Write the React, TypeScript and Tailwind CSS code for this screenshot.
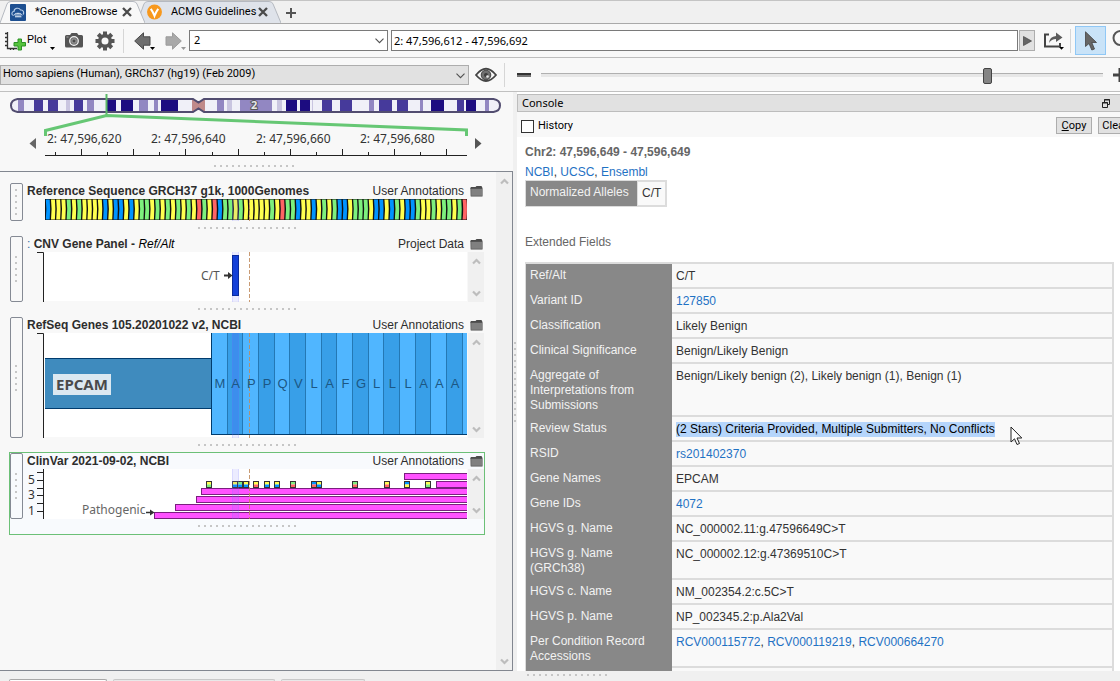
import React from "react";

const BASES =
  "BYYYGYGYYYYBYBBYBYGGYGYGYGYGYRGYRBGGYGYYYYYGYRGGBYYBYGYGBBYGGGYBBYBGYBBGYYGYGGYGR";

const BASE_COLORS: Record<string, string> = {
  B: "#0094ff",
  Y: "#ffff4f",
  G: "#7df07d",
  R: "#ff6464",
};

const PEPTIDE = "MAPPQVLAFGLLLAAA";

const BANDS: [number, number, string][] = [
  [18, 24, "#9287c2"],
  [34, 43, "#463a9b"],
  [48, 58, "#463a9b"],
  [66, 70, "#c9c5e0"],
  [74, 83, "#463a9b"],
  [87, 94, "#9287c2"],
  [107, 116, "#1c0c80"],
  [121, 133, "#1c0c80"],
  [139, 148, "#9287c2"],
  [154, 158, "#9287c2"],
  [161, 178, "#1c0c80"],
  [192, 205, "#c08a8a"],
  [217, 224, "#9287c2"],
  [227, 232, "#c9c5e0"],
  [240, 272, "#9287c2"],
  [277, 282, "#c9c5e0"],
  [286, 297, "#1c0c80"],
  [300, 310, "#1c0c80"],
  [312, 313, "#c9c5e0"],
  [322, 332, "#463a9b"],
  [340, 352, "#463a9b"],
  [369, 374, "#9287c2"],
  [379, 392, "#463a9b"],
  [397, 408, "#463a9b"],
  [420, 423, "#9287c2"],
  [431, 444, "#1c0c80"],
  [457, 464, "#463a9b"],
  [466, 476, "#1c0c80"],
  [485, 489, "#9287c2"],
];

const VARIANTS: [number, string, string][] = [
  [206, "Y", "G"],
  [232, "Y", "B"],
  [237, "G", "B"],
  [243, "Y", "B"],
  [253, "Y", "R"],
  [264, "Y", "B"],
  [274, "Y", "B"],
  [290, "G", "R"],
  [311, "B", "R"],
  [316, "Y", "B"],
  [352, "G", "R"],
  [384, "Y", "R"],
  [404, "B", "Y"],
  [425, "Y", "G"],
];

const CNV_BARS: [number, number][] = [
  [404, 4],
  [436, 12],
  [201, 19],
  [196, 27],
  [175, 35],
  [154, 43],
];

const FIELDS: { label: string; value: string[]; kind?: "link" | "selected" }[] = [
  { label: "Ref/Alt", value: ["C/T"] },
  { label: "Variant ID", value: ["127850"], kind: "link" },
  { label: "Classification", value: ["Likely Benign"] },
  { label: "Clinical Significance", value: ["Benign/Likely Benign"] },
  {
    label: "Aggregate of Interpretations from Submissions",
    value: ["Benign/Likely benign (2), Likely benign (1), Benign (1)"],
  },
  {
    label: "Review Status",
    value: ["(2 Stars) Criteria Provided, Multiple Submitters, No Conflicts"],
    kind: "selected",
  },
  { label: "RSID", value: ["rs201402370"], kind: "link" },
  { label: "Gene Names", value: ["EPCAM"] },
  { label: "Gene IDs", value: ["4072"], kind: "link" },
  { label: "HGVS g. Name", value: ["NC_000002.11:g.47596649C>T"] },
  { label: "HGVS g. Name (GRCh38)", value: ["NC_000002.12:g.47369510C>T"] },
  { label: "HGVS c. Name", value: ["NM_002354.2:c.5C>T"] },
  { label: "HGVS p. Name", value: ["NP_002345.2:p.Ala2Val"] },
  {
    label: "Per Condition Record Accessions",
    value: ["RCV000115772", "RCV000119219", "RCV000664270"],
    kind: "link",
  },
];

function Links({ items }: { items: string[] }) {
  return (
    <>
      {items.map((item, i) => (
        <React.Fragment key={item}>
          {i > 0 && ", "}
          <a href="#" className="text-[#1f72c4]">
            {item}
          </a>
        </React.Fragment>
      ))}
    </>
  );
}

function Grip({ vertical = false, count = 14, className = "" }: { vertical?: boolean; count?: number; className?: string }) {
  const dots = Array.from({ length: count }, (_, i) => i * 6);
  const len = count * 6 - 4;
  return (
    <svg width={vertical ? 3 : len} height={vertical ? len : 3} className={"shrink-0 " + className} aria-hidden="true">
      {dots.map((d) => (
        <rect key={d} x={vertical ? 0 : d} y={vertical ? d : 0} width="2" height="2" fill="#c6c6c6" />
      ))}
    </svg>
  );
}

function Chevron({ up = false }: { up?: boolean }) {
  return (
    <svg width="9" height="7" viewBox="0 0 9 7" fill="none" stroke="#bdbdbd" strokeWidth="2.2" aria-hidden="true">
      <path d={up ? "M1 5.5 4.5 2 8 5.5" : "M1 1.5 4.5 5 8 1.5"} />
    </svg>
  );
}

function ThinChevron() {
  return (
    <svg width="9" height="6" viewBox="0 0 9 6" fill="none" stroke="#505050" strokeWidth="1.1" className="pointer-events-none absolute right-1 top-2" aria-hidden="true">
      <path d="M.5 .7 4.5 4.7 8.5 .7" />
    </svg>
  );
}

function ScrollStrip() {
  return (
    <div className="flex w-4 shrink-0 flex-col items-center justify-between bg-[#f0f0f0] pb-1 pt-[6px]">
      <button type="button" aria-label="Scroll up" className="flex h-2">
        <Chevron up />
      </button>
      <button type="button" aria-label="Scroll down" className="flex h-2">
        <Chevron />
      </button>
    </div>
  );
}

function Folder() {
  return (
    <svg width="13" height="11" viewBox="0 0 13 11" aria-hidden="true">
      <path d="M0 2.5 1 1 5.500 1 6.500 0 11.500 0 12.500 2V10.500H.8Z" fill="#4b4b4b" />
      <path d="M1.200 2.800H12.200V9.800H1.200Z" fill="#808080" />
      <path d="M0 2.500H.8V10.500L0 9Z" fill="#b0b0b0" />
    </svg>
  );
}

function CloseIcon() {
  return (
    <svg width="10" height="10" viewBox="0 0 10 10" stroke="#4a4a4a" strokeWidth="2.3" aria-hidden="true">
      <path d="M1 1 9 9M9 1 1 9" />
    </svg>
  );
}

function Tab({ title, icon, active = false, width }: { title: string; icon: React.ReactNode; active?: boolean; width: string }) {
  return (
    <div className={"relative flex h-[22px] items-center pl-[10px] " + width + (active ? " z-10" : " -ml-2")}>
      <svg viewBox="0 0 145 22" preserveAspectRatio="none" className="absolute inset-0 h-full w-full" aria-hidden="true">
        <path
          d="M0 22 7 3Q8 .5 11 .5H133Q136 .5 137 3L145 22"
          fill={active ? "#f8f8f8" : "#dfe3ea"}
          stroke="#b5b9c0"
        />
      </svg>
      <button type="button" className="relative flex flex-1 items-center whitespace-nowrap font-['Roboto',sans-serif]">
        {icon}
        <span className="pl-[9px]">{title}</span>
      </button>
      <button type="button" aria-label={"Close " + title} className="relative mr-[13px] shrink-0">
        <CloseIcon />
      </button>
    </div>
  );
}

function TabBar() {
  return (
    <div className="flex h-6 shrink-0 items-end border-b border-[#a9a9a9] bg-[#f0f0f0]">
      <div className="flex h-[23px] flex-1 items-end border-t border-[#c4c4c4]">
        <Tab
          active
          width="w-[145px]"
          title="*GenomeBrowse"
          icon={
            <svg width="16" height="17" viewBox="0 0 16 17" className="shrink-0" aria-hidden="true">
              <rect width="16" height="17" rx="1" fill="#1d4f91" />
              <path d="M3.500 11.500C1 11 1.500 7.500 4 7.500 4 4 9 3 10.500 6 13.500 5.500 14.500 9 13 10.500" fill="none" stroke="#b7cde8" strokeWidth="1.100" />
              <path d="M4 11.500C4 8.500 12 8.500 12 11.500M5 12.800H11.500M6 9.600V12.800M8 9V13M10 9.500V12.800" fill="none" stroke="#e8f0fa" strokeWidth=".9" />
            </svg>
          }
        />
        <Tab
          width="w-[144px]"
          title="ACMG Guidelines"
          icon={
            <svg width="15" height="16" viewBox="0 0 14 15" className="shrink-0" aria-hidden="true">
              <circle cx="7" cy="7.500" r="7" fill="#f7981d" />
              <path d="M3.500 4.500Q5.500 7 7 11 8.500 7 10.500 4.500" fill="none" stroke="#fff" strokeWidth="2" />
            </svg>
          }
        />
        <button type="button" aria-label="New tab" className="mb-1 ml-1 p-px">
          <svg width="10" height="10" viewBox="0 0 10 10" stroke="#555" strokeWidth="2" aria-hidden="true">
            <path d="M5 0V10M0 5H10" />
          </svg>
        </button>
      </div>
    </div>
  );
}

function MenuMark({ className = "" }: { className?: string }) {
  return (
    <svg width="5" height="3" viewBox="0 0 5 3" className={className} aria-hidden="true">
      <path d="M0 0H5L2.500 3Z" fill="currentColor" />
    </svg>
  );
}

function Arrow({ light = false, flip = false }: { light?: boolean; flip?: boolean }) {
  return (
    <svg width="17" height="18" viewBox="0 0 17 18" className={"shrink-0" + (flip ? " -scale-x-100" : "")} aria-hidden="true">
      <path
        d="M.7 9 9.500 .8V4.800H16V13.200H9.500V17.200Z"
        fill={light ? "#a9a9a9" : "#6e6e6e"}
        stroke={light ? "#9c9c9c" : "#4a4a4a"}
      />
    </svg>
  );
}

function Toolbar() {
  return (
    <div className="flex h-[34px] shrink-0 items-center overflow-hidden border-b border-[#bdbdbd] bg-[#f8f8f8]">
      <button type="button" className="ml-1 flex w-[51px] shrink-0 items-center font-['Roboto',sans-serif]">
        <svg width="22" height="20" viewBox="0 0 22 20" className="shrink-0" aria-hidden="true">
          <path d="M3.500 1V17.500H13M1 2.500H3.500M1 6.500H3.500M1 10.500H3.500M1 14.500H3.500M6.500 17V19M9.500 17V19" fill="none" stroke="#333" strokeWidth="1.300" />
          <path d="M14 8H17.500V11.500H21.500V15H17.500V19H14V15H10V11.500H14Z" fill="#55c23d" stroke="#2c9226" />
        </svg>
        <span className="flex-1 pl-px text-left">Plot</span>
        <MenuMark className="mt-4 shrink-0" />
      </button>
      <button type="button" aria-label="Take snapshot" className="ml-[10px] shrink-0">
        <svg width="18" height="15" viewBox="0 0 18 15" aria-hidden="true">
          <path d="M0 3.500Q0 2 1.500 2H5L6.500 0H12L13.500 2H16.500Q18 2 18 3.500V13Q18 14.500 16.500 14.500H1.500Q0 14.500 0 13Z" fill="#555" />
          <circle cx="9" cy="8" r="4.300" fill="#777" stroke="#f4f4f4" strokeWidth="1.200" />
          <circle cx="9" cy="8" r="2" fill="#4c4c4c" stroke="#bbb" strokeWidth=".6" />
          <rect x="1.500" y="3.500" width="2" height="1" fill="#aaa" />
        </svg>
      </button>
      <button type="button" aria-label="Settings" className="ml-3 shrink-0">
        <svg width="20" height="20" viewBox="-10 -10 20 20" aria-hidden="true">
          {[0, 45, 90, 135].map((a) => (
            <rect key={a} x="-2" y="-9.500" width="4" height="19" fill="#555" transform={`rotate(${a})`} />
          ))}
          <circle r="5.300" fill="none" stroke="#555" strokeWidth="3.600" />
          <circle r="3.500" fill="#f8f8f8" />
        </svg>
      </button>
      <div className="mx-2 h-6 w-px shrink-0 bg-[#d6d6d6]" />
      <button type="button" aria-label="Back" className="ml-[2px] flex w-[21px] shrink-0 items-center">
        <Arrow />
        <MenuMark className="-ml-px mt-4 shrink-0" />
      </button>
      <button type="button" aria-label="Forward" className="ml-[10px] flex w-[21px] shrink-0 items-center text-[#999]">
        <Arrow light flip />
        <MenuMark className="-ml-px mt-4 shrink-0" />
      </button>
      <label className="relative ml-[3px] w-[199px] shrink-0">
        <select aria-label="Chromosome" className="block h-[21px] w-full appearance-none border border-[#7a7a7a] bg-white pl-1">
          <option>2</option>
        </select>
        <ThinChevron />
      </label>
      <input
        type="text"
        aria-label="Location"
        defaultValue="2: 47,596,612 - 47,596,692"
        className="ml-[3px] block h-[21px] min-w-0 flex-1 border border-[#7a7a7a] bg-white px-[2px]"
      />
      <button type="button" aria-label="Go" className="ml-px flex h-[21px] w-4 shrink-0 items-center justify-center border border-[#adadad] bg-[#e1e1e1]">
        <svg width="9" height="10" viewBox="0 0 9 10" aria-hidden="true">
          <path d="M.5 .5 8.500 5 .5 9.500Z" fill="#666" stroke="#444" strokeWidth=".7" />
        </svg>
      </button>
      <button type="button" aria-label="Export" className="ml-2 shrink-0">
        <svg width="22" height="19" viewBox="0 0 22 19" aria-hidden="true">
          <path d="M6 3.500H2V15.500H17V12" fill="none" stroke="#444" strokeWidth="2" />
          <path d="M6 12Q6.500 5.500 13 5V1.500L19.500 6.500 13 11V8Q8.500 8 6 12Z" fill="#5c5c5c" />
          <path d="M16 16H21L18.500 18.800Z" fill="#000" />
        </svg>
      </button>
      <div className="ml-[5px] mr-1 h-6 w-px shrink-0 bg-[#d6d6d6]" />
      <button type="button" aria-label="Select" className="flex h-[29px] w-[31px] shrink-0 items-center justify-center border border-[#90c8f6] bg-[#c9e3f8]">
        <svg width="12" height="20" viewBox="0 0 12 20" aria-hidden="true">
          <path d="M.5 .8V15.500L4 12.500 6.800 19 9.500 18 6.800 11.500H11.500Z" fill="#666" stroke="#444" strokeWidth=".8" />
        </svg>
      </button>
      <button type="button" aria-label="Zoom" className="-mr-[14px] ml-[6px] mb-1 w-[22px] shrink-0">
        <svg width="22" height="22" viewBox="0 0 22 22" fill="none" stroke="#555" aria-hidden="true">
          <circle cx="8.500" cy="10" r="7" strokeWidth="2" />
          <path d="M14 15 20 21" strokeWidth="3" />
        </svg>
      </button>
    </div>
  );
}

function GenomeBar() {
  return (
    <div className="flex h-[34px] shrink-0 items-center overflow-hidden border-b border-[#c0c0c0] bg-[#f8f8f8]">
      <label className="relative w-[469px] shrink-0">
        <select
          aria-label="Genome assembly"
          className="block h-5 w-full appearance-none border border-[#adadad] bg-[#e1e1e1] pl-[2px] font-['Roboto',sans-serif]"
        >
          <option>Homo sapiens (Human), GRCh37 (hg19) (Feb 2009)</option>
        </select>
        <ThinChevron />
      </label>
      <button type="button" aria-label="Toggle visibility" className="ml-[6px] shrink-0">
        <svg width="22" height="16" viewBox="0 0 22 16" aria-hidden="true">
          <path d="M1 8Q11-4.500 21 8 11 20 1 8Z" fill="#f8f8f8" stroke="#444" strokeWidth="1.800" />
          <circle cx="11" cy="8" r="4.800" fill="#707070" stroke="#444" />
          <circle cx="11" cy="8" r="2" fill="#3c3c3c" />
          <circle cx="12.500" cy="9.500" r="1.300" fill="#e8e8e8" />
        </svg>
      </button>
      <div className="ml-[7px] mr-3 h-6 w-px shrink-0 bg-[#d6d6d6]" />
      <button type="button" aria-label="Zoom out" className="shrink-0">
        <svg width="14" height="4" aria-hidden="true">
          <rect width="14" height="4" fill="#777" />
          <rect width="14" height="2" fill="#333" />
        </svg>
      </button>
      <input
        type="range"
        aria-label="Zoom level"
        defaultValue={80}
        className="ml-[10px] mr-[10px] h-4 min-w-0 flex-1 appearance-none bg-transparent [&::-webkit-slider-runnable-track]:h-1 [&::-webkit-slider-runnable-track]:border-t [&::-webkit-slider-runnable-track]:border-[#b0b0b0] [&::-webkit-slider-runnable-track]:bg-[#e7e7e7] [&::-webkit-slider-thumb]:-mt-[6px] [&::-webkit-slider-thumb]:h-4 [&::-webkit-slider-thumb]:w-[9px] [&::-webkit-slider-thumb]:appearance-none [&::-webkit-slider-thumb]:rounded-xs [&::-webkit-slider-thumb]:border [&::-webkit-slider-thumb]:border-[#444] [&::-webkit-slider-thumb]:bg-[#858585]"
      />
      <button type="button" aria-label="Zoom in" className="-mr-[7px] shrink-0">
        <svg width="14" height="14" stroke="#444" strokeWidth="3" aria-hidden="true">
          <path d="M7 0V14M0 7H14" />
        </svg>
      </button>
    </div>
  );
}

function Ideogram() {
  const outline =
    "M17.500 99H193L198.500 102.500 204 99H493.500Q500 100 500 105.500 500 111 493.500 112H204L198.500 108.500 193 112H17.500Q11 111 11 105.500 11 100 17.500 99Z";
  return (
    <svg width="512" height="46" viewBox="0 92 512 46" className="shrink-0" role="img" aria-label="Chromosome 2 ideogram">
      <clipPath id="chromosome">
        <path d={outline} />
      </clipPath>
      <g clipPath="url(#chromosome)">
        <rect x="8" y="97" width="496" height="18" fill="#f0f0f8" />
        {BANDS.map(([a, b, color]) => (
          <rect key={a} x={a} y="97" width={b - a} height="18" fill={color} />
        ))}
      </g>
      <path d={outline} fill="none" stroke="#524d70" strokeWidth="2" />
      <text
        x="251"
        y="109"
        className="font-['Noto_Sans'] text-[11px] font-bold"
        fill="#e6e6e6"
        stroke="#555"
        strokeWidth="2"
        paintOrder="stroke"
      >
        2
      </text>
      <path d="M106.500 94V115.500" fill="none" stroke="#5cb868" strokeWidth="2" />
      <path d="M45.500 136V130.500L106.500 115.500 466.500 130V136" fill="none" stroke="#66c774" strokeWidth="3" />
    </svg>
  );
}

function Ruler() {
  return (
    <div className="-mt-[10px] flex h-[37px] shrink-0 items-start pl-[29px]">
      <button type="button" aria-label="Pan left" className="pt-[10px]">
        <svg width="7" height="11" aria-hidden="true">
          <path d="M7 0V11L.5 5.500Z" fill="#666" />
        </svg>
      </button>
      <svg width="422" height="32" viewBox="45 128 422 32" className="ml-[9px]" aria-hidden="true">
        {[
          [47, "2: 47,596,620"],
          [151, "2: 47,596,640"],
          [256, "2: 47,596,660"],
          [360, "2: 47,596,680"],
        ].map(([x, t]) => (
          <text key={t} x={x} y="143" className="font-['Noto_Sans'] text-[12px]" fill="#333">
            {t}
          </text>
        ))}
        <path d="M45 155.500H467" stroke="#222" />
        {[81, 133, 185, 238, 290, 342, 394, 446].map((x) => (
          <path key={x} d={`M${x + 0.5} 149V155M${x - 25.5} 152V155`} stroke="#222" />
        ))}
      </svg>
      <button type="button" aria-label="Pan right" className="ml-2 pt-[10px]">
        <svg width="7" height="11" aria-hidden="true">
          <path d="M0 0V11L6.500 5.500Z" fill="#555" />
        </svg>
      </button>
    </div>
  );
}

function Locus({ height }: { height: number }) {
  return (
    <>
      <rect x="232" y="0" width="7" height={height} fill="#7878ff" fillOpacity=".14" />
      <path d={`M232.500 0V${height}M238.500 0V${height}`} stroke="#7878ff" strokeOpacity=".15" />
      <path d={`M249.500 0V${height}`} stroke="#c08a5c" strokeOpacity=".85" strokeDasharray="4 2" />
    </>
  );
}

function Track({
  title,
  source,
  height,
  scroll = true,
  selected = false,
  children,
}: {
  title: React.ReactNode;
  source: string;
  height: number;
  scroll?: boolean;
  selected?: boolean;
  children: React.ReactNode;
}) {
  return (
    <section className={"mx-[10px] w-[474px]" + (selected ? " bg-[#f8fafd] ring-1 ring-[#6cc077]" : "")}>
      <div className="flex">
        <div className="mr-px flex w-[13px] shrink-0 items-center justify-center rounded-xs border border-[#858a94]">
          <Grip vertical count={5} />
        </div>
        <div className="min-w-0 flex-1">
          <header className="flex h-4 items-center pl-[3px] pr-px font-['Liberation_Sans'] text-[12px] text-[#2d2d2d]">
            <h2 className="flex-1 font-bold">{title}</h2>
            <span className="pr-[6px]">{source}</span>
            <Folder />
          </header>
          <div className="flex">
            <svg width="443" height={height} viewBox={`24 0 443 ${height}`} className="mr-px shrink-0">
              {children}
            </svg>
            {scroll && <ScrollStrip />}
          </div>
        </div>
      </div>
      <div className="flex h-[15px] items-center justify-center">
        <Grip count={17} />
      </div>
    </section>
  );
}

function ReferenceTrack() {
  const step = 422 / 81;
  return (
    <Track title="Reference Sequence GRCH37 g1k, 1000Genomes" source="User Annotations" height={22} scroll={false}>
      <rect x="45" y="0" width="422" height="21" fill="#111" />
      {BASES.split("").map((b, i) => {
        const x = 45 + i * step;
        return (
          <path
            key={i}
            d={`M${x + 0.8} .5Q${x + 2} 10 ${x + 0.8} 20.500H${x + step - 0.5}Q${x + step + 0.4} 10 ${x + step - 0.5} .5Z`}
            fill={BASE_COLORS[b]}
          />
        );
      })}
      <Locus height={22} />
    </Track>
  );
}

function VariantTrack() {
  return (
    <Track
      title={
        <>
          <span className="font-normal text-[#3b6ea5]">: </span>CNV Gene Panel -{" "}
          <em className="font-normal text-black">Ref/Alt</em>
        </>
      }
      source="Project Data"
      height={50}
    >
      <rect x="44" y="0" width="423" height="49" fill="#fff" />
      <path d="M37 .5H43.500V50" fill="none" stroke="#222" />
      <Locus height={50} />
      <rect x="232.500" y="3.500" width="6" height="40" fill="#1440d8" stroke="#0a2a9c" />
      <text x="201" y="28" className="font-['Noto_Sans'] text-[12px]" fill="#555">
        C/T
      </text>
      <path d="M224 23.500H229" stroke="#333" strokeWidth="2" />
      <path d="M228 20V27L232.500 23.500Z" fill="#333" />
    </Track>
  );
}

function GeneTrack() {
  const step = 15.67;
  return (
    <Track title="RefSeq Genes 105.20201022 v2, NCBI" source="User Annotations" height={105}>
      <rect x="44" y="0" width="423" height="104" fill="#fff" />
      <path d="M37 .5H43.500V105" fill="none" stroke="#222" />
      <rect x="45" y="25" width="166" height="51" fill="#3f8bbe" />
      <path d="M45 25.500H211M45 75.500H211" stroke="#003c6e" />
      <rect x="53" y="41" width="58" height="21" fill="#dbe8f1" />
      <text x="56" y="57" className="font-['Noto_Sans'] text-[15px] font-bold" fill="#4a4a4a">
        EPCAM
      </text>
      {Array.from({ length: 17 }, (_, i) => {
        const x = 211.5 + i * step;
        return (
          <g key={i}>
            <rect x={x} y="0" width={Math.min(step, 467 - x)} height="101" fill={i % 2 ? "#389fe8" : "#50b6ff"} />
            <path d={`M${Math.floor(x) + 0.5} 0V101`} stroke={i ? "#2478b4" : "#003c6e"} />
          </g>
        );
      })}
      <path d="M211 101.500H467" stroke="#003c6e" />
      <rect x="232" y="0" width="7" height="101" fill="#2c80f0" fillOpacity=".4" />
      <Locus height={105} />
      {PEPTIDE.split("").map((p, i) => (
        <text
          key={i}
          x={220 + i * step}
          y="55"
          textAnchor="middle"
          className="font-['Liberation_Sans'] text-[13px]"
          fill="#1c5784"
        >
          {p}
        </text>
      ))}
    </Track>
  );
}

function ClinVarTrack() {
  return (
    <Track title="ClinVar 2021-09-02, NCBI" source="User Annotations" height={50} selected>
      <rect x="44" y="0" width="423" height="50" fill="#fff" />
      <path d="M43.500 0V50M37 3.500H43M37 11.500H43M37 19.500H43M37 26.500H43M37 34.500H43M37 42.500H43" stroke="#222" />
      {[
        ["5", 15],
        ["3", 30],
        ["1", 46],
      ].map(([t, y]) => (
        <text key={t} x="28" y={y} className="font-['Noto_Sans'] text-[12px]" fill="#333">
          {t}
        </text>
      ))}
      <text x="82" y="45" className="font-['Noto_Sans'] text-[12px]" fill="#666">
        Pathogenic
      </text>
      {CNV_BARS.map(([x, y]) => (
        <rect key={y} x={x + 0.5} y={y + 0.5} width={470 - x} height="6" fill="#ff52ff" stroke="#7a1f7f" />
      ))}
      <path d="M146 43.500H151" stroke="#333" strokeWidth="1.500" />
      <path d="M150 40.500 154.500 43.500 150 46.500Z" fill="#333" />
      {VARIANTS.map(([x, top, bottom]) => (
        <g key={x}>
          <rect x={x + 0.5} y="12.500" width="5" height="3" fill={BASE_COLORS[top]} />
          <rect x={x + 0.5} y="15.500" width="5" height="3" fill={BASE_COLORS[bottom]} />
          <rect x={x + 0.5} y="12.500" width="5" height="6" fill="none" stroke="#333" />
        </g>
      ))}
      <Locus height={50} />
    </Track>
  );
}

function BrowserPane() {
  return (
    <div className="flex w-[513px] shrink-0 flex-col bg-[#f8f8f8]">
      <Ideogram />
      <Ruler />
      <Grip className="ml-[214px]" />
      <div className="mt-[3px] flex min-h-0 flex-1 border-b border-r border-t border-[#828790]">
        <div className="min-w-0 flex-1 overflow-hidden pt-[11px]">
          <ReferenceTrack />
          <VariantTrack />
          <GeneTrack />
          <ClinVarTrack />
        </div>
        <ScrollStrip />
      </div>
    </div>
  );
}

function Console() {
  return (
    <div className="flex min-w-0 flex-1 flex-col overflow-hidden bg-white">
      <header className="mt-[2px] flex h-[18px] shrink-0 items-center justify-between border-y border-l border-[#bdbdbd] bg-[#e1e1e1] pl-1 pr-[10px]">
        <h1>Console</h1>
        <button type="button" aria-label="Float panel">
          <svg width="8" height="9" viewBox="0 0 8 9" fill="none" stroke="#222" aria-hidden="true">
            <path d="M2.500 3V.5H7.500V5.500H5.500M2 1H8" />
            <path d="M.5 3.500H5.500V8.500H.5ZM0 4H6" />
          </svg>
        </button>
      </header>
      <div className="flex h-[25px] shrink-0 items-center bg-[#f8f8f8] pl-1 font-['Roboto',sans-serif]">
        <label className="flex flex-1 items-center gap-1 pt-[3px]">
          <input type="checkbox" className="h-[13px] w-[13px] appearance-none border border-[#333] bg-white" />
          History
        </label>
        <button type="button" className="mt-[2px] h-[17px] w-9 shrink-0 border border-[#adadad] bg-[#e1e1e1] leading-none">
          <u>C</u>opy
        </button>
        <button type="button" className="-mr-3 ml-[6px] mt-[2px] h-[17px] w-[34px] shrink-0 border border-[#adadad] bg-[#e1e1e1] leading-none">
          Clear
        </button>
      </div>
      <div className="min-h-0 flex-1 overflow-hidden pl-2 pr-[6px] font-['Liberation_Sans'] text-[12px] leading-[15px] text-[#333]">
        <p className="pt-2 font-bold text-[#666]">Chr2: 47,596,649 - 47,596,649</p>
        <p className="pt-[5px]">
          <Links items={["NCBI", "UCSC", "Ensembl"]} />
        </p>
        <table className="border-separate border-spacing-0 border border-[#dcdcdc]">
          <tbody>
            <tr>
              <th scope="row" className="w-[111px] bg-[#888] px-1 pb-[6px] pt-1 text-left font-normal text-[#f2f2f2]">
                Normalized Alleles
              </th>
              <td className="border border-[#dcdcdc] bg-[#f9f9f9] px-1">C/T</td>
            </tr>
          </tbody>
        </table>
        <h2 className="pb-3 pt-7 text-[#666]">Extended Fields</h2>
        <table className="w-full border-separate border-spacing-0 border-l border-t-2 border-[#dcdcdc]">
          <tbody>
            {FIELDS.map((f) => (
              <tr key={f.label} className="align-top">
                <th scope="row" className="w-[146px] bg-[#888] px-1 py-1 text-left font-normal text-[#f2f2f2]">
                  {f.label}
                </th>
                <td className="border-b-2 border-r-2 border-[#dcdcdc] bg-[#f9f9f9] px-1 pb-[3px] pt-[5px]">
                  {f.kind === "link" ? (
                    <Links items={f.value} />
                  ) : f.kind === "selected" ? (
                    <span className="relative inline-block bg-[#b5d5fb] text-black">
                      {f.value[0]}
                      <svg width="13" height="20" viewBox="0 0 13 20" className="absolute -right-7 top-1" aria-hidden="true">
                        <path d="M1 1V16L4.500 12.800 7 18.500 9.500 17.500 7 12H11.800Z" fill="#fff" stroke="#222" />
                      </svg>
                    </span>
                  ) : (
                    f.value[0]
                  )}
                </td>
              </tr>
            ))}
            <tr>
              <th className="h-6 bg-[#888]" />
              <td className="border-r-2 border-[#dcdcdc] bg-[#f9f9f9]" />
            </tr>
          </tbody>
        </table>
      </div>
    </div>
  );
}

export default function App() {
  return (
    <div className="flex h-screen flex-col overflow-hidden bg-[#f0f0f0] font-['Noto_Sans',sans-serif] text-[11px] text-black">
      <TabBar />
      <Toolbar />
      <GenomeBar />
      <main className="flex min-h-0 flex-1">
        <BrowserPane />
        <div className="flex w-1 shrink-0 items-center justify-center">
          <Grip vertical />
        </div>
        <Console />
      </main>
      <footer className="flex h-[10px] shrink-0 items-end gap-[6px] pl-[9px]">
        <div className="h-[2px] w-[98px] rounded-t-sm border border-b-0 border-[#a8a8a8] bg-white" />
        <div className="h-[2px] w-[162px] rounded-t-sm border border-b-0 border-[#c8c8c8] bg-[#e8e8e8]" />
        <div className="h-[2px] w-[84px] rounded-t-sm border border-b-0 border-[#c8c8c8] bg-[#e8e8e8]" />
        <Grip className="mb-1 ml-[156px]" />
      </footer>
    </div>
  );
}
